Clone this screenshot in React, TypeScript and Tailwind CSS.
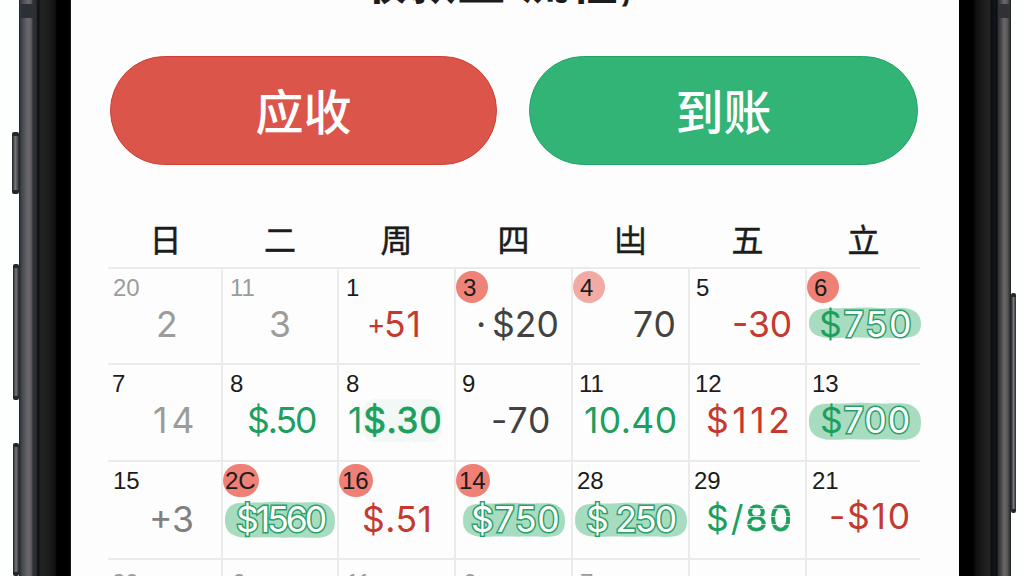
import type { ReactNode } from "react";
import clsx from "clsx";

type Cell = {
    day?: string;
    dayClass?: string;
    dot?: string;
    amount?: ReactNode;
    amountClass?: string;
    blob?: string;
};

const GREEN = "text-[#1d9f5d]";
const RED = "text-[#c5392f]";
const GRAY = "text-[#9c9c9a]";
const DARK = "text-[#424242]";
const OUTLINED = "text-white [-webkit-text-stroke:3px_#2a9f67] [paint-order:stroke_fill]";

const weekdays = ["日", "二", "周", "四", "凷", "五", "立"];

const weeks: { height: string; amountTop: string; cells: Cell[] }[] = [
    {
        height: "h-24",
        amountTop: "mt-[7px]",
        cells: [
            { day: "20", dayClass: `ml-[5px] ${GRAY}`, amount: "2", amountClass: `ml-[48px] ${GRAY}` },
            { day: "11", dayClass: `ml-[7px] ${GRAY}`, amount: "3", amountClass: `ml-[46px] ${GRAY}` },
            {
                day: "1",
                dayClass: "ml-[7px]",
                amount: (
                    <>
                        <span className="inline-block w-[17px] align-[3px] text-[28px] leading-none">+</span>51
                    </>
                ),
                amountClass: `ml-[28px] tracking-[1px] ${RED}`,
            },
            {
                day: "3",
                dayClass: "ml-[7px]",
                dot: "bg-[#ee8478] left-0 size-8",
                amount: (
                    <>
                        <span className="inline-block w-4">·</span>$20
                    </>
                ),
                amountClass: `ml-[20px] ${DARK}`,
            },
            { day: "4", dayClass: "ml-[7px]", dot: "bg-[#f1aaa4] left-0 size-8", amount: "70", amountClass: `ml-[60px] tracking-[1px] ${DARK}` },
            { day: "5", dayClass: "ml-[6px]", amount: "-30", amountClass: `ml-[42px] ${RED}` },
            {
                day: "6",
                dayClass: "ml-[7px]",
                dot: "bg-[#ee8075] left-0 size-8",
                amount: (
                    <>
                        <span className={GREEN}>$</span>
                        <span className={OUTLINED}>750</span>
                    </>
                ),
                amountClass: "ml-[12px] tracking-[2px]",
                blob: "left-0.5 top-0 h-8 w-28",
            },
        ],
    },
    {
        height: "h-[97px]",
        amountTop: "mt-[7px]",
        cells: [
            { day: "7", dayClass: "ml-1", amount: "14", amountClass: `ml-[45px] tracking-[4px] ${GRAY}` },
            { day: "8", dayClass: "ml-[7px]", amount: "$.50", amountClass: `ml-[24px] tracking-[-2px] ${GREEN}` },
            {
                day: "8",
                dayClass: "ml-[7px]",
                amount: (
                    <>
                        1<span className="rounded-xl bg-[#1d9f5d]/5 [-webkit-text-stroke:0.8px_#1d9f5d]">$.30</span>
                    </>
                ),
                amountClass: `ml-[9px] tracking-[0.7px] ${GREEN}`,
            },
            { day: "9", dayClass: "ml-[6px]", amount: "-70", amountClass: `ml-[35px] tracking-[1px] ${DARK}` },
            { day: "11", dayClass: "ml-[6px]", amount: "10.40", amountClass: `ml-[11px] tracking-[0.4px] ${GREEN}` },
            { day: "12", dayClass: "ml-[5px]", amount: "$112", amountClass: `ml-[16px] tracking-[3.5px] ${RED}` },
            {
                day: "13",
                dayClass: "ml-[5px]",
                amount: (
                    <>
                        <span className={GREEN}>$</span>
                        <span className={OUTLINED}>700</span>
                    </>
                ),
                amountClass: "ml-[13px] tracking-[1px]",
                blob: "left-0.5 -top-px h-[39px] w-28",
            },
        ],
    },
    {
        height: "h-[98px]",
        amountTop: "mt-[9px]",
        cells: [
            { day: "15", dayClass: "ml-[5px]", amount: "+3", amountClass: "ml-[41px] text-[#80807e]" },
            {
                day: "2C",
                dayClass: "ml-[2px]",
                dot: "bg-[#ee8076] left-0 h-[33px] w-9",
                amount: <span className={OUTLINED}>$1560</span>,
                amountClass: "ml-[13px] tracking-[-3px]",
                blob: "left-0.5 -top-px h-[38px] w-[110px]",
            },
            { day: "16", dayClass: "ml-[3px]", dot: "bg-[#ee8076] left-0 h-[33px] w-[34px]", amount: "$.51", amountClass: `ml-[23px] tracking-[0.5px] ${RED}` },
            {
                day: "14",
                dayClass: "ml-[3px]",
                dot: "bg-[#ee8076] left-0 h-[33px] w-[34px]",
                amount: <span className={OUTLINED}>$750</span>,
                amountClass: "ml-[15px] tracking-[0.7px]",
                blob: "left-[7px] top-0 h-9 w-[102px]",
            },
            {
                day: "28",
                dayClass: "ml-[4px]",
                amount: <span className={OUTLINED}>$ 250</span>,
                amountClass: "ml-[13px] tracking-[-1.8px]",
                blob: "left-0.5 top-0 h-9 w-[112px]",
            },
            {
                day: "29",
                dayClass: "ml-[4px]",
                amount: (
                    <>
                        $/
                        <span className="bg-[repeating-linear-gradient(0deg,#1d9f5d_0_7px,#bfe5d0_7px_8px)] bg-clip-text text-transparent [-webkit-text-stroke:0.8px_transparent]">
                            80
                        </span>
                    </>
                ),
                amountClass: `-mt-px ml-[16px] tracking-[2px] ${GREEN}`,
            },
            { day: "21", dayClass: "ml-[5px]", amount: "-$10", amountClass: `-mt-[3px] ml-[22px] tracking-[1.7px] ${RED}` },
        ],
    },
    {
        height: "h-24",
        amountTop: "mt-[7px]",
        cells: [
            { day: "20", dayClass: `ml-1 mt-1 ${GRAY}` },
            { day: "6", dayClass: `ml-[9px] mt-1 ${GRAY}` },
            { day: "11", dayClass: `ml-[7px] mt-1 ${GRAY}` },
            { day: "6", dayClass: `ml-[7px] mt-1 ${GRAY}` },
            { day: "7", dayClass: `ml-[7px] mt-1 ${GRAY}` },
            {},
            {},
        ],
    },
];

// hand-painted marker stroke behind an amount
function Marker({ className }: { className: string }) {
    return (
        <svg className={clsx("absolute", className)} viewBox="0 0 112 38" preserveAspectRatio="none">
            <path
                d="M14 2 C24 1 34 2 46 1 C60 0 68 2 78 1.5 C90 1 98 1 102 3 C110 7 112 13 112 20 C112 30 108 35 98 36.5 C86 37.5 82 36 70 36.5 C54 37 46 36 34 36.5 C24 37 16 37 11 35 C2 32 0 26 0 19 C0 10 4 3 14 2 Z"
                fill="#a8dcc1"
            />
        </svg>
    );
}

function DayCell({ cell, amountTop, first }: { cell: Cell; amountTop: string; first: boolean }) {
    return (
        <div className={clsx("border-t-2 border-[#ebebea] pt-[7px]", !first && "border-l-2")}>
            <div className="relative h-6">
                {cell.dot && <span className={clsx("absolute -top-[5px] rounded-full", cell.dot)} />}
                <div className={clsx("relative text-2xl leading-6 whitespace-nowrap", cell.dayClass)}>{cell.day}</div>
            </div>
            {cell.amount && (
                <div className={clsx("relative h-9", amountTop)}>
                    {cell.blob && <Marker className={cell.blob} />}
                    <div
                        className={clsx(
                            "relative font-[Inter,sans-serif] text-[35.5px] leading-9 whitespace-nowrap",
                            cell.amountClass,
                        )}
                    >
                        {cell.amount}
                    </div>
                </div>
            )}
        </div>
    );
}

function SideButton({ className }: { className: string }) {
    return (
        <span
            className={clsx(
                "absolute rounded-xs border-y-4 border-[#25282b] bg-linear-to-r from-[#202326] via-[#77777a] to-[#2b2b2e]",
                className,
            )}
        />
    );
}

export default function App() {
    return (
        <div className="relative flex h-[576px] w-[1024px] overflow-hidden bg-[#fdfefe] font-['Liberation_Sans','Noto_Sans_CJK_SC',sans-serif] text-[#1c1c1c]">
            <div className="relative ml-[19px] w-[52px] shrink-0 bg-[linear-gradient(90deg,#1d2225_0px,#3b4044_2px,#505256_5px,#6a686d_9px,#626064_12px,#303033_14px,#2d2d2f_17px,#0b0f13_19px,#10151a_20px,#242424_22px,#1c1c1c_30px,#111_36px,#000_38px,#000_51px,#333_52px)]">
                <span className="absolute top-1 left-0.5 h-3.5 w-3 bg-[#2a3035]" />
                <SideButton className="top-[132px] -left-[7px] h-[62px] w-[7px]" />
                <SideButton className="top-[264px] -left-[6px] h-[136px] w-[6px]" />
                <SideButton className="top-[443px] -left-[6px] h-[133px] w-[6px]" />
            </div>

            <main className="w-[888px] shrink-0 bg-[#fdfdfd]">
                <h1 className="-mt-[40px] h-[96px] pr-[38px] text-center text-[48px] leading-[46px] font-bold tracking-[1px] whitespace-pre">
                    收款至 流程,
                </h1>

                <div className="ml-[39px] flex gap-8 text-[48px] leading-none font-medium text-white [text-shadow:1px_2px_2px_rgb(0_0_0/0.2)]">
                    <button className="h-[109px] w-[387px] rounded-full border border-[#d23e34] bg-[#dc554b] pt-1.5">应收</button>
                    <button className="h-[109px] w-[389px] rounded-full border border-[#20a765] bg-[#32b477] pt-1.5">到账</button>
                </div>

                <div className="ml-[37px] w-[812px]">
                    <div className="mt-[59px] grid h-[43px] grid-cols-[113px_116px_repeat(4,117px)_115px] text-center text-[32px] leading-[34px] [-webkit-text-stroke:0.5px_currentColor]">
                        {weekdays.map((name) => (
                            <span key={name} className="pl-0.5">
                                {name}
                            </span>
                        ))}
                    </div>
                    {weeks.map((week, i) => (
                        <div key={i} className={clsx("grid grid-cols-[113px_116px_repeat(4,117px)_115px]", week.height)}>
                            {week.cells.map((cell, j) => (
                                <DayCell key={j} cell={cell} amountTop={week.amountTop} first={j === 0} />
                            ))}
                        </div>
                    ))}
                </div>
            </main>

            <div className="relative w-[52px] shrink-0 bg-[linear-gradient(90deg,#000_0px,#000_14px,#101010_17px,#202020_27px,#242424_31px,#0a0d11_32px,#10161b_36px,#0b0b0d_38px,#2d2d2f_39px,#464548_42px,#6a676b_45px,#5e5b5e_48px,#3e3e41_50px,#1d1d20_52px)]">
                <span className="absolute top-1 right-0.5 h-3.5 w-2.5 bg-[#2f3134]" />
                <SideButton className="top-[293px] -right-[5px] h-[220px] w-[5px]" />
            </div>
        </div>
    );
}
